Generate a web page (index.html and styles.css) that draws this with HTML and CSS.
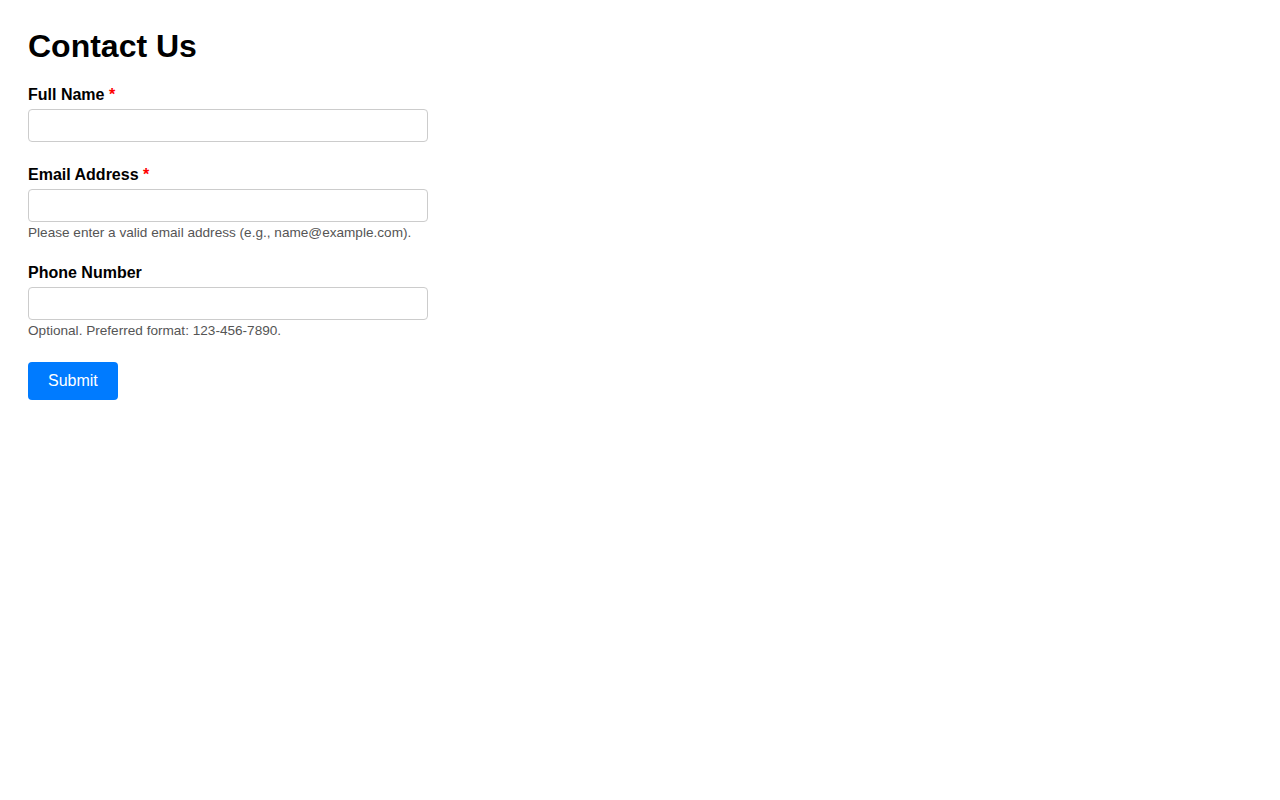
FILE: index.html
```html
<!DOCTYPE html>
<html lang="en">
<head>
<meta charset="utf-8">
<title>Contact Us</title>
<link rel="stylesheet" href="styles.css">
</head>
<body>
<main class="page">
  <h1 class="title">Contact Us</h1>
  <form class="form">
    <div class="group">
      <label class="label" for="name">Full Name <span class="req">*</span></label>
      <input class="input" id="name" type="text">
    </div>
    <div class="group">
      <label class="label" for="email">Email Address <span class="req">*</span></label>
      <input class="input" id="email" type="email">
      <small class="help">Please enter a valid email address (e.g., name@example.com).</small>
    </div>
    <div class="group">
      <label class="label" for="phone">Phone Number</label>
      <input class="input" id="phone" type="tel">
      <small class="help">Optional. Preferred format: 123-456-7890.</small>
    </div>
    <button class="submit" type="submit">Submit</button>
  </form>
</main>
</body>
</html>
```

FILE: styles.css
```css
html, body {
  margin: 0;
  padding: 0;
  background: #fff;
}
body {
  font-family: "Liberation Sans", Arial, Helvetica, sans-serif;
  color: #000;
}
.page {
  padding: 26px 28px;
}
.title {
  margin: 0 0 19px;
  padding-top: 2px;
  font-size: 32px;
  line-height: 37px;
  font-weight: bold;
}
.form {
  width: 400px;
  display: flex;
  flex-direction: column;
  align-items: flex-start;
}
.group {
  width: 100%;
  display: flex;
  flex-direction: column;
  margin-bottom: 22px;
}
.label {
  font-size: 16px;
  line-height: 18px;
  font-weight: bold;
  padding-top: 2px;
  margin-bottom: 5px;
}
.req {
  color: #ff0000;
}
.input {
  box-sizing: border-box;
  width: 400px;
  height: 33px;
  margin: 0;
  border: 1px solid #cccccc;
  border-radius: 4px;
  padding: 6px 8px;
  font-family: inherit;
  font-size: 16px;
  background: #fff;
  outline: none;
}
.help {
  font-size: 13.6px;
  line-height: 15px;
  color: #555555;
  margin-top: 3px;
  margin-bottom: 0;
}
.submit {
  margin-top: 2px;
  background: #007bff;
  color: #fff;
  border: none;
  border-radius: 4px;
  padding: 10px 20px;
  font-family: inherit;
  font-size: 16px;
  line-height: 18px;
  cursor: pointer;
}
```
